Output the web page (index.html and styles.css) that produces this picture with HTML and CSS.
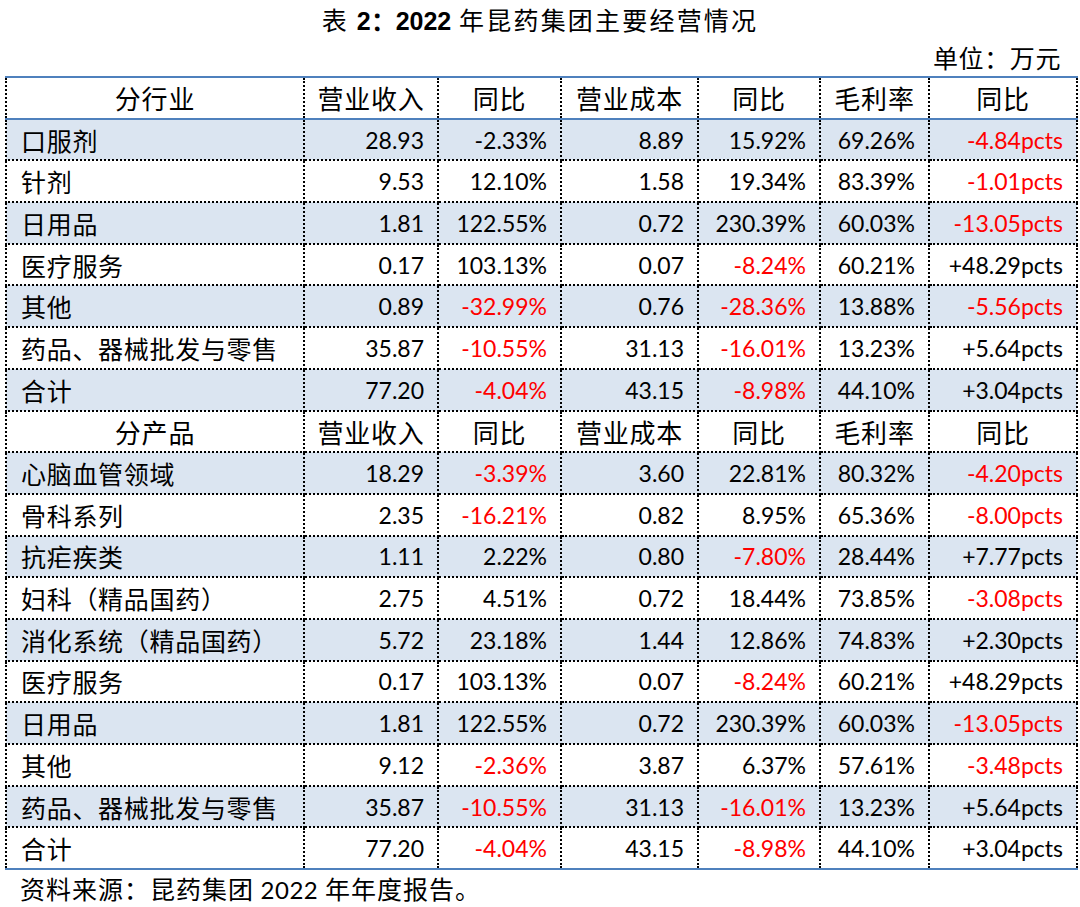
FILE: index.html
```html
<!DOCTYPE html>
<html lang="zh-CN">
<head>
<meta charset="utf-8">
<title>2022年昆药集团主要经营情况</title>
<link rel="stylesheet" href="styles.css">
</head>
<body>
<div class="page">
  <h1 class="title">表 <span class="title-num">2：2022</span> 年昆药集团主要经营情况</h1>
  <div class="unit">单位：万元</div>
  <table class="data">
    <colgroup>
      <col class="c1"><col class="c2"><col class="c3"><col class="c4"><col class="c5"><col class="c6"><col class="c7">
    </colgroup>
    <thead>
      <tr class="head">
        <th>分行业</th><th>营业收入</th><th>同比</th><th>营业成本</th><th>同比</th><th>毛利率</th><th>同比</th>
      </tr>
    </thead>
    <tbody>
      <tr class="shade"><td class="name">口服剂</td><td class="num">28.93</td><td class="num">-2.33%</td><td class="num">8.89</td><td class="num">15.92%</td><td class="num">69.26%</td><td class="num red">-4.84pcts</td></tr>
      <tr><td class="name">针剂</td><td class="num">9.53</td><td class="num">12.10%</td><td class="num">1.58</td><td class="num">19.34%</td><td class="num">83.39%</td><td class="num red">-1.01pcts</td></tr>
      <tr class="shade"><td class="name">日用品</td><td class="num">1.81</td><td class="num">122.55%</td><td class="num">0.72</td><td class="num">230.39%</td><td class="num">60.03%</td><td class="num red">-13.05pcts</td></tr>
      <tr><td class="name">医疗服务</td><td class="num">0.17</td><td class="num">103.13%</td><td class="num">0.07</td><td class="num red">-8.24%</td><td class="num">60.21%</td><td class="num">+48.29pcts</td></tr>
      <tr class="shade"><td class="name">其他</td><td class="num">0.89</td><td class="num red">-32.99%</td><td class="num">0.76</td><td class="num red">-28.36%</td><td class="num">13.88%</td><td class="num red">-5.56pcts</td></tr>
      <tr><td class="name">药品、器械批发与零售</td><td class="num">35.87</td><td class="num red">-10.55%</td><td class="num">31.13</td><td class="num red">-16.01%</td><td class="num">13.23%</td><td class="num">+5.64pcts</td></tr>
      <tr class="shade"><td class="name">合计</td><td class="num">77.20</td><td class="num red">-4.04%</td><td class="num">43.15</td><td class="num red">-8.98%</td><td class="num">44.10%</td><td class="num">+3.04pcts</td></tr>
      <tr class="subhead">
        <th>分产品</th><th>营业收入</th><th>同比</th><th>营业成本</th><th>同比</th><th>毛利率</th><th>同比</th>
      </tr>
      <tr class="shade"><td class="name">心脑血管领域</td><td class="num">18.29</td><td class="num red">-3.39%</td><td class="num">3.60</td><td class="num">22.81%</td><td class="num">80.32%</td><td class="num red">-4.20pcts</td></tr>
      <tr><td class="name">骨科系列</td><td class="num">2.35</td><td class="num red">-16.21%</td><td class="num">0.82</td><td class="num">8.95%</td><td class="num">65.36%</td><td class="num red">-8.00pcts</td></tr>
      <tr class="shade"><td class="name">抗疟疾类</td><td class="num">1.11</td><td class="num">2.22%</td><td class="num">0.80</td><td class="num red">-7.80%</td><td class="num">28.44%</td><td class="num">+7.77pcts</td></tr>
      <tr><td class="name">妇科（精品国药）</td><td class="num">2.75</td><td class="num">4.51%</td><td class="num">0.72</td><td class="num">18.44%</td><td class="num">73.85%</td><td class="num red">-3.08pcts</td></tr>
      <tr class="shade"><td class="name">消化系统（精品国药）</td><td class="num">5.72</td><td class="num">23.18%</td><td class="num">1.44</td><td class="num">12.86%</td><td class="num">74.83%</td><td class="num">+2.30pcts</td></tr>
      <tr><td class="name">医疗服务</td><td class="num">0.17</td><td class="num">103.13%</td><td class="num">0.07</td><td class="num red">-8.24%</td><td class="num">60.21%</td><td class="num">+48.29pcts</td></tr>
      <tr class="shade"><td class="name">日用品</td><td class="num">1.81</td><td class="num">122.55%</td><td class="num">0.72</td><td class="num">230.39%</td><td class="num">60.03%</td><td class="num red">-13.05pcts</td></tr>
      <tr><td class="name">其他</td><td class="num">9.12</td><td class="num red">-2.36%</td><td class="num">3.87</td><td class="num">6.37%</td><td class="num">57.61%</td><td class="num red">-3.48pcts</td></tr>
      <tr class="shade"><td class="name">药品、器械批发与零售</td><td class="num">35.87</td><td class="num red">-10.55%</td><td class="num">31.13</td><td class="num red">-16.01%</td><td class="num">13.23%</td><td class="num">+5.64pcts</td></tr>
      <tr class="last"><td class="name">合计</td><td class="num">77.20</td><td class="num red">-4.04%</td><td class="num">43.15</td><td class="num red">-8.98%</td><td class="num">44.10%</td><td class="num">+3.04pcts</td></tr>
    </tbody>
  </table>
  <p class="source">资料来源：昆药集团 <span class="latin">2022</span> 年年度报告。</p>
</div>
</body>
</html>
```

FILE: styles.css
```css
html, body {
  margin: 0;
  padding: 0;
  background: #ffffff;
}

.page {
  width: 1080px;
  height: 907px;
  color: #000000;
  font-family: "Noto Sans CJK SC", "Noto Sans", sans-serif;
}

.title {
  margin: 0;
  height: 38px;
  line-height: 38px;
  text-align: center;
  font-size: 25px;
  font-weight: 400;
  letter-spacing: 2.2px;
}

.title-num {
  font-family: "Liberation Sans", Arial, sans-serif;
  font-weight: 700;
  letter-spacing: 0;
}

.unit {
  height: 38px;
  line-height: 38px;
  text-align: right;
  font-size: 25px;
  letter-spacing: 0.6px;
  padding-right: 19px;
}

.data {
  margin-left: 5px;
  width: 1071px;
  table-layout: fixed;
  border-collapse: collapse;
  border-top: 2px solid #4f81bd;
  border-bottom: 2px solid #4f81bd;
}

.c1 { width: 298px; }
.c2 { width: 134px; }
.c3 { width: 123px; }
.c4 { width: 137px; }
.c5 { width: 122px; }
.c6 { width: 109px; }
.c7 { width: 148px; }

.data tr {
  height: 41.7px;
}

.data th,
.data td {
  border: 2px dotted #000000;
  padding: 0;
  vertical-align: middle;
  white-space: nowrap;
}

.data th {
  font-size: 26px;
  font-weight: 400;
  text-align: center;
  letter-spacing: 0.8px;
}

.head th {
  border-top: 2px solid #4f81bd;
  border-bottom: 2px solid #4f81bd;
}

.data .last td {
  border-bottom: 2px solid #4f81bd;
}

.shade td {
  background: #dbe5f1;
}

.name {
  font-size: 25px;
  padding-left: 14px !important;
  text-align: left;
  letter-spacing: 0.7px;
}

.num {
  font-family: Lato, "Noto Sans", sans-serif;
  font-size: 23px;
  text-align: right;
  padding-right: 13px !important;
}

.red {
  color: #ff0000;
}

.source {
  margin: 0;
  padding-left: 20px;
  height: 37px;
  line-height: 37px;
  font-size: 25px;
  letter-spacing: 1px;
}

.latin {
  font-family: Lato, "Noto Sans", sans-serif;
  font-size: 24px;
  letter-spacing: 0.5px;
}
```
